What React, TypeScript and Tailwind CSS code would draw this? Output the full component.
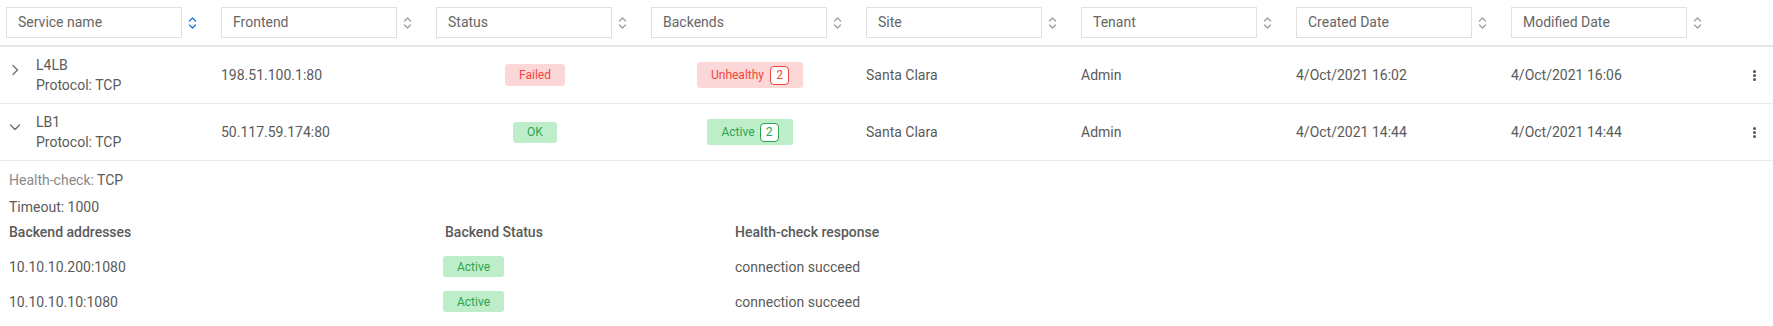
import React from 'react';

type Row = {
  name: string;
  frontend: string;
  status: 'ok' | 'failed';
  backends: number;
  site: string;
  tenant: string;
  created: string;
  modified: string;
  open: boolean;
};

const rows: Row[] = [
  {
    name: 'L4LB',
    frontend: '198.51.100.1:80',
    status: 'failed',
    backends: 2,
    site: 'Santa Clara',
    tenant: 'Admin',
    created: '4/Oct/2021 16:02',
    modified: '4/Oct/2021 16:06',
    open: false,
  },
  {
    name: 'LB1',
    frontend: '50.117.59.174:80',
    status: 'ok',
    backends: 2,
    site: 'Santa Clara',
    tenant: 'Admin',
    created: '4/Oct/2021 14:44',
    modified: '4/Oct/2021 14:44',
    open: true,
  },
];

const columns = [
  'Service name',
  'Frontend',
  'Status',
  'Backends',
  'Site',
  'Tenant',
  'Created Date',
  'Modified Date',
];

const backendRows = [
  { address: '10.10.10.200:1080', response: 'connection succeed' },
  { address: '10.10.10.10:1080', response: 'connection succeed' },
];

const SortIcon = ({ active }: { active?: boolean }) => (
  <svg width="9" height="16" viewBox="0 0 9 16" fill="none" className={active ? 'text-[#1a73e8]' : 'text-[#9e9e9e]'}>
    <path d="M1.5 6 L4.5 3 L7.5 6" stroke="currentColor" strokeWidth="1.3" strokeLinecap="round" strokeLinejoin="round" />
    <path d="M1.5 10 L4.5 13 L7.5 10" stroke="currentColor" strokeWidth="1.3" strokeLinecap="round" strokeLinejoin="round" />
  </svg>
);

const Chevron = ({ open }: { open: boolean }) => (
  <svg width="16" height="16" viewBox="0 0 16 16" fill="none" className="text-[#757575]">
    {open ? (
      <path d="M3.5 6 L8 10.5 L12.5 6" stroke="currentColor" strokeWidth="1.5" strokeLinecap="round" strokeLinejoin="round" />
    ) : (
      <path d="M6 3.5 L10.5 8 L6 12.5" stroke="currentColor" strokeWidth="1.5" strokeLinecap="round" strokeLinejoin="round" />
    )}
  </svg>
);

const Kebab = () => (
  <div className="flex flex-col gap-[1px]">
    <span className="w-[3px] h-[3px] rounded-full bg-[#555]" />
    <span className="w-[3px] h-[3px] rounded-full bg-[#555]" />
    <span className="w-[3px] h-[3px] rounded-full bg-[#555]" />
  </div>
);

const StatusBadge = ({ status }: { status: Row['status'] }) =>
  status === 'failed' ? (
    <span className="inline-flex items-center justify-center w-[60px] h-[22px] rounded-[3px] bg-[#fcd7d7] text-[#f1453d] text-[12px]">
      Failed
    </span>
  ) : (
    <span className="inline-flex items-center justify-center w-[44px] h-[21px] rounded-[3px] bg-[#bdedc9] text-[#2ea44f] text-[12px]">
      OK
    </span>
  );

const BackendsBadge = ({ status, count }: { status: Row['status']; count: number }) =>
  status === 'failed' ? (
    <span className="inline-flex items-center justify-center gap-[6px] w-[106px] h-[26px] rounded-[3px] bg-[#fcd7d7] text-[#f1453d] text-[12px]">
      Unhealthy
      <span className="inline-flex items-center justify-center w-[19px] h-[19px] rounded-[4px] border border-[#f1453d] bg-white">
        {count}
      </span>
    </span>
  ) : (
    <span className="inline-flex items-center justify-center gap-[5px] w-[86px] h-[26px] rounded-[3px] bg-[#bdedc9] text-[#2ea44f] text-[12px]">
      Active
      <span className="inline-flex items-center justify-center w-[19px] h-[19px] rounded-[4px] border border-[#2ea44f] bg-white">
        {count}
      </span>
    </span>
  );

const App: React.FC = () => {
  return (
    <div className="w-[1773px] min-h-[326px] bg-white text-[14px] text-[#5a5a5a] font-['Roboto','Liberation_Sans',sans-serif]">
      {/* header with filter inputs */}
      <div className="flex items-center h-[47px] pl-[6px] border-b-2 border-[#e6e6e6]">
        {columns.map((col, i) => (
          <div key={col} className="w-[215px] flex items-center">
            <div className="w-[176px] h-[31px] border border-[#e0e0e0] flex items-center pl-[11px] text-[#666]">
              {col}
            </div>
            <div className="ml-[6px] flex items-center">
              <SortIcon active={i === 0} />
            </div>
          </div>
        ))}
      </div>

      {rows.map((row) => (
        <div key={row.name}>
          <div className="flex items-center h-[57px] pl-[6px] border-b border-[#ebebeb]">
            <div className="w-[215px] flex items-start self-stretch">
              <div className="mt-[15px] ml-[1px]">
                <Chevron open={row.open} />
              </div>
              <div className="ml-[13px] self-center leading-[20px]">
                <div>{row.name}</div>
                <div>Protocol: TCP</div>
              </div>
            </div>
            <div className="w-[215px]">{row.frontend}</div>
            <div className="w-[215px]">
              <div className="w-[198px] flex justify-center">
                <StatusBadge status={row.status} />
              </div>
            </div>
            <div className="w-[215px]">
              <div className="w-[198px] flex justify-center">
                <BackendsBadge status={row.status} count={row.backends} />
              </div>
            </div>
            <div className="w-[215px]">{row.site}</div>
            <div className="w-[215px]">{row.tenant}</div>
            <div className="w-[215px]">{row.created}</div>
            <div className="w-[215px]">{row.modified}</div>
            <div className="w-[47px] pl-[27px] flex">
              <Kebab />
            </div>
          </div>

          {row.open && (
            <div className="pl-[9px] pt-[9px] leading-[20px]">
              <div>
                <span className="text-[#8a8a8a]">Health-check:</span> TCP
              </div>
              <div className="mt-[7px]">Timeout: 1000</div>
              <div className="flex items-center h-[30px] font-medium">
                <div className="w-[436px]">Backend addresses</div>
                <div className="w-[290px]">Backend Status</div>
                <div>Health-check response</div>
              </div>
              <div className="mt-[2px]">
                {backendRows.map((b) => (
                  <div key={b.address} className="flex items-center h-[35px]">
                    <div className="w-[434px]">{b.address}</div>
                    <div className="w-[292px]">
                      <span className="inline-flex items-center justify-center w-[61px] h-[21px] rounded-[3px] bg-[#bdedc9] text-[#2ea44f] text-[12px]">
                        Active
                      </span>
                    </div>
                    <div>{b.response}</div>
                  </div>
                ))}
              </div>
            </div>
          )}
        </div>
      ))}
    </div>
  );
};

export default App;
